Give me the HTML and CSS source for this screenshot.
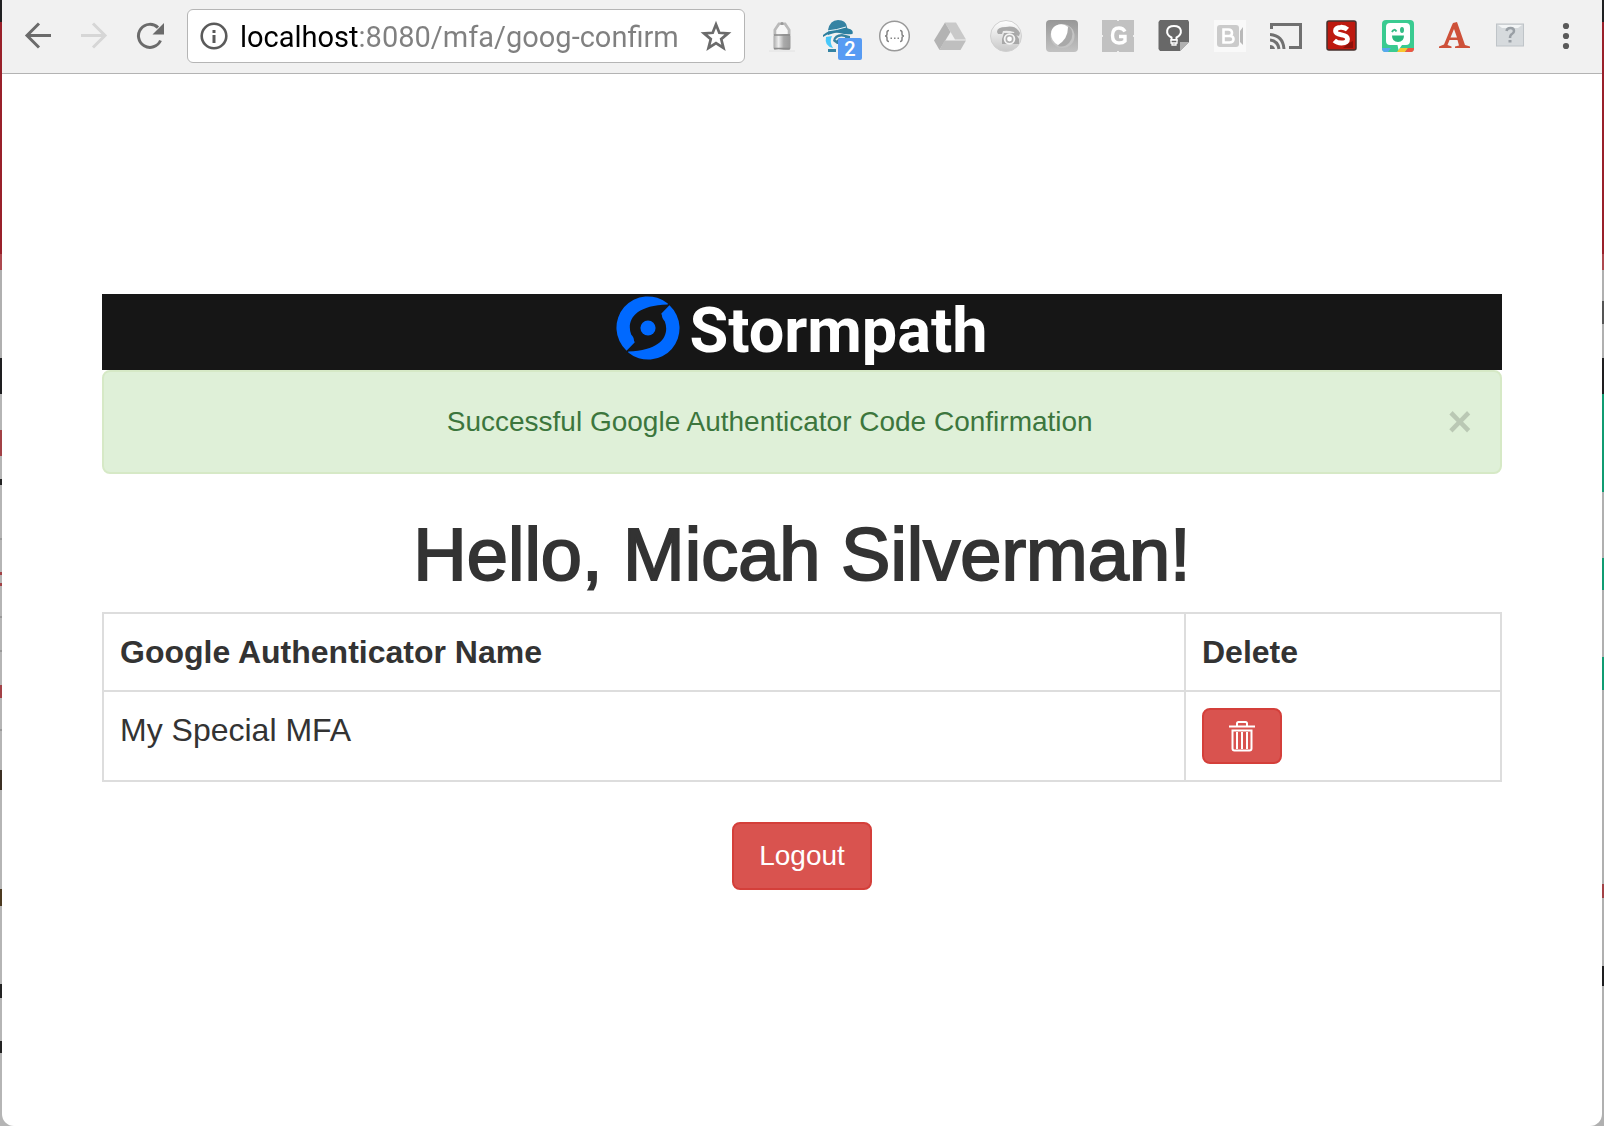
FILE: index.html
```html
<!DOCTYPE html>
<html lang="en">
<head>
<meta charset="utf-8">
<meta name="viewport" content="width=device-width, initial-scale=1">
<title>Stormpath MFA</title>
<link rel="stylesheet" href="styles.css">
</head>
<body>
<div class="window">
  <header class="toolbar">
    <nav class="icon-group" aria-label="Navigation">
      <button class="tool" type="button" aria-label="Back"><svg viewBox="0 0 32 32" fill="none" stroke="#6b6b6b" stroke-width="3"><path d="M29 15.500H5M17 3.500L5 15.500l12 12"/></svg></button>
      <button class="tool" type="button" aria-label="Forward" disabled><svg viewBox="0 0 32 32" fill="none" stroke="#d6d6d6" stroke-width="3"><path d="M3 15.500h24M15 3.500l12 12-12 12"/></svg></button>
      <button class="tool" type="button" aria-label="Reload"><svg viewBox="0 0 32 32"><path d="M26.500 20.500A11.500 11.500 0 1 1 24 7.600" fill="none" stroke="#6b6b6b" stroke-width="3"/><path d="M30 3v11.500H18.500z" fill="#6b6b6b"/></svg></button>
    </nav>
    <div class="omnibox">
      <svg class="info" viewBox="0 0 28 28"><circle cx="14" cy="14" r="12.300" fill="none" stroke="#5a5a5a" stroke-width="2.600"/><path d="M12.500 8h3v3h-3zM12.500 13h3v8h-3z" fill="#5a5a5a"/></svg>
      <input class="address" type="text" aria-label="Address" value="localhost:8080/mfa/goog-confirm">
      <button class="star" type="button" aria-label="Bookmark this page"><svg viewBox="0 0 32 32"><path d="M16 4.500l3.300 8.300 8.700.6-6.800 5.700 2.300 8.900-7.500-4.900-7.500 4.900 2.300-8.900L4 13.400l8.700-.6z" fill="none" stroke="#6b6b6b" stroke-width="2.700"/></svg></button>
    </div>
    <div class="icon-group">
      <button class="tool" type="button" aria-label="Lock"><svg viewBox="0 0 32 32"><defs><linearGradient id="metal"><stop offset="0" stop-color="#aaa"/><stop offset=".3" stop-color="#eee"/><stop offset=".6" stop-color="#aaa"/><stop offset="1" stop-color="#999"/></linearGradient></defs><path d="M9 15V10l4-6h6l4 6v5" fill="none" stroke="#bababa" stroke-width="3"/><path d="M10.500 14v-4l3.500-5h4l3.500 5v4" fill="#f7f7f7"/><circle cx="16" cy="3.500" r="1.500" fill="#999"/><rect x="7.500" y="14" width="17" height="16" rx="2" fill="url(#metal)"/><path d="M8 15h16M8 28.500h16" stroke="#8c8c8c" stroke-width="1.500"/><path d="M3 31h26" stroke="#e2e2e2"/></svg></button>
      <button class="tool badged" type="button" aria-label="Privacy, 2 items"><svg viewBox="0 0 32 32"><path d="M6 10Q8 0 16 0t9 7l1 4Q13 12 6 15z" fill="#3583a3"/><path d="M1 15Q7 10 15 8.500T26 8.500q6 1 4.500 5.500-6 1-13-1T1 17z" fill="#2d7f9f"/><path d="M5 11q10-1 19-4" stroke="#eaf5f8" fill="none"/><path d="M4 17l6-1q-3 6 1 12-9-2-7-11z" fill="#48c8fa"/><path d="M11 21q1-7 9-7l8 2v8H15z" fill="#3583a3"/><path d="M14 20q3-4 9-2" fill="none" stroke="#eee" stroke-width="1.500"/><path d="M6 32v-3h8v3" fill="#3583a3"/></svg><span class="badge">2</span></button>
      <button class="tool" type="button" aria-label="JSON viewer"><svg viewBox="0 0 32 32"><circle cx="16.500" cy="16" r="14.800" fill="#fff" stroke="#999" stroke-width="1.500"/><path d="M11 10.500q-2 0-2 2v1.500q0 2-2 2 2 0 2 2v1.500q0 2 2 2M22 10.500q2 0 2 2v1.500q0 2 2 2-2 0-2 2v1.500q0 2-2 2" fill="none" stroke="#858585" stroke-width="1.500"/><path d="M12.500 17.500H14v1.500h-1.500zM16 17.500h1.500v1.500H16zM19.500 17.500H21v1.500h-1.500z" fill="#888"/></svg></button>
      <button class="tool" type="button" aria-label="Drive"><svg viewBox="0 0 32 32"><path d="M11 2.500h11l10 17H21z" fill="#c9c9c9"/><path d="M11 2.500l5.500 9.500L5.500 30 0 20.500z" fill="#b3b3b3"/><path d="M10.500 20.500H32L26.500 30h-21z" fill="#bfbfbf"/></svg></button>
      <button class="tool" type="button" aria-label="Phone"><svg viewBox="0 0 32 32"><defs><linearGradient id="disc" x2="0" y2="1"><stop offset="0" stop-color="#fff"/><stop offset="1" stop-color="#c8c8c8"/></linearGradient></defs><circle cx="16" cy="16" r="15.500" fill="url(#disc)" stroke="#d0d0d0"/><path d="M7 12q0-5 9-5 10-2 14 6l-1 3-4-1-1-3q-6-2-11-1l-1 3H8z" fill="#aaa"/><path d="M14 13h11l4 6v5H12v-5z" fill="#a8a8a8"/><circle cx="19.500" cy="19" r="5.800" fill="#f5f5f5"/><circle cx="19.500" cy="19" r="4" fill="#b0b0b0"/><circle cx="19.500" cy="19" r="2.400" fill="#fff"/></svg></button>
      <button class="tool" type="button" aria-label="Shield"><svg viewBox="0 0 32 32"><defs><linearGradient id="tile" x2="0" y2="1"><stop offset="0" stop-color="#979797"/><stop offset="1" stop-color="#c2c2c2"/></linearGradient></defs><rect width="32" height="32" rx="4" fill="url(#tile)"/><circle cx="16.500" cy="16" r="12" fill="#c4c4c4"/><path d="M23 6q7 8 0 17-5 5-11 3z" fill="#a9a9a9"/><path d="M5 14q0-6 5-8.500 7-3 12 1.500 0 12-10 18-7-4-7-11z" fill="#fff"/></svg></button>
      <button class="tool" type="button" aria-label="G"><svg viewBox="0 0 32 32"><path d="M0 0h32v32H0z" fill="#c1c1c1"/><path d="M15 0h2v1h-2zM15 31h2v1h-2zM0 15h1v2H0zM31 15h1v2h-1z" fill="#eee"/><path d="M23 11.500Q21 8 17 8q-6.500 0-6.500 7.500T17 23q4 0 6-2v-4.500h-6" fill="none" stroke="#fff" stroke-width="3.400"/></svg></button>
      <button class="tool" type="button" aria-label="Notes"><svg viewBox="0 0 32 32"><path d="M2 0h28l1 2v20l-9 9H2l-1.500-2V2z" fill="#686868"/><path d="M31 22h-9v9z" fill="#b0b0b0"/><path d="M13.500 20v-2.500q-5-2.500-4.300-7Q10 6 16 6t6.800 4.500q.7 4.500-4.300 7V20z" fill="none" stroke="#fff" stroke-width="2"/><path d="M13 20h6v3h-6zM14 23h4v2h-4z" fill="#686868" stroke="#fff" stroke-width="1.300"/></svg></button>
      <button class="tool" type="button" aria-label="Video"><svg viewBox="0 0 32 32"><path d="M0 0h32v32H0z" fill="#f9f9f9"/><rect x="3" y="5" width="22" height="22" rx="3" fill="#cbcbcb"/><path d="M26 11l3-4v18l-3-3z" fill="#b9b9b9"/><path d="M9.500 9.500v13h6q4 0 4-3.500 0-3-3.500-3h-6 5q3 0 3-3.200 0-3.300-3.500-3.300z" fill="none" stroke="#fff" stroke-width="2.600"/></svg></button>
      <button class="tool" type="button" aria-label="Cast"><svg viewBox="0 0 32 32" fill="none" stroke="#707070" stroke-width="3"><path d="M1.500 9V4.500h29v23H19"/><path d="M0 14.500q13 1 14 14.500M0 20q8 1 9 9"/><path d="M0 25q4 0 5 4H0z" fill="#707070" stroke="none"/></svg></button>
      <button class="tool" type="button" aria-label="S"><svg viewBox="0 0 32 32"><rect x="1" y="1" width="29" height="29" rx="2" fill="#bd190f" stroke="#45302e" stroke-width="1.500"/><path d="M18 27l5-4 4-2v7H17z" fill="#8e100a"/><path d="M21.500 9.500Q18.500 7 14.500 7.300q-5 .2-5 3.700 0 2.800 6 3.800 6 1 6 4.200 0 4-6 4-4.500 0-7.200-2.500" fill="none" stroke="#fff" stroke-width="4.800"/></svg></button>
      <button class="tool" type="button" aria-label="Smiley"><svg viewBox="0 0 32 32"><rect width="32" height="32" rx="4" fill="#3acb91"/><path d="M0 28h9l-3 4H3q-3 0-3-4z" fill="#57a8ee"/><path d="M18 28h8l-3 4h-8z" fill="#f9c62e"/><path d="M26 28h6q0 4-3 4h-6z" fill="#ef5642"/><path d="M8 3h16q4 0 4 4v14q0 4-4 4h-4l-3.500 5-1-5H8q-4 0-4-4V7q0-4 4-4z" fill="#fff"/><path d="M10 15.500h12q0 6.500-6 6.500t-6-6.500z" fill="#29b97e"/><path d="M10 12q2-4 4.500-.5" fill="none" stroke="#35bd87" stroke-width="2"/><ellipse cx="20" cy="10" rx="2" ry="3" fill="#35bd87"/></svg></button>
      <button class="tool" type="button" aria-label="A"><svg viewBox="0 0 32 32"><path fill="#ce5139" fill-rule="evenodd" d="M15 3l4-1 8 23 5 1.500V28H17v-1.500l4-1-1.500-5.500h-8L9.500 25l4 1.500V28H1v-1.500l5-2L14 5zM16 9l-3.500 8.500h6.500z"/></svg></button>
      <button class="tool" type="button" aria-label="Unknown extension"><svg viewBox="0 0 32 32"><rect x="2.500" y="4" width="27" height="22" fill="#d6dadd" stroke="#bfc4c8"/><path d="M4 5h24l-4 3H8z" fill="#f3f5f6"/><path d="M12.500 11q.5-3 4-3t3.500 3q0 2-2 3t-2 4" fill="none" stroke="#999fa5" stroke-width="2.500"/><path d="M14.500 20h3v2.500h-3z" fill="#999fa5"/></svg></button>
      <button class="tool" type="button" aria-label="Menu"><svg viewBox="0 0 32 32" fill="#5a5a5a"><circle cx="16" cy="6" r="3.100"/><circle cx="16" cy="16" r="3.100"/><circle cx="16" cy="26" r="3.100"/></svg></button>
    </div>
  </header>
  <main class="page">
    <div class="brand">
      <svg class="brand-mark" viewBox="58 33 194 194" fill="#0069ff"><path d="M215 56A95 95 0 0 0 90 199L115 173C110 167 116 163 104 150C90 112 108 62 215 59Z"/><path d="M215 56A95 95 0 0 0 90 199L115 173C110 167 116 163 104 150C90 112 108 62 215 59Z" transform="rotate(180 155 130)"/><circle cx="155" cy="130" r="23"/></svg>
      <span class="brand-name">Stormpath</span>
    </div>
    <div class="alert" role="alert">
      <p class="alert-text">Successful Google Authenticator Code Confirmation</p>
      <button class="close" type="button" aria-label="Close">×</button>
    </div>
    <h1 class="greeting">Hello, Micah Silverman!</h1>
    <table class="factors">
      <thead><tr><th scope="col">Google Authenticator Name</th><th class="delete-col" scope="col">Delete</th></tr></thead>
      <tbody><tr><td>My Special MFA</td><td><button class="btn btn-trash" type="button" aria-label="Delete My Special MFA"><svg viewBox="0 0 26 32" fill="none" stroke="#fff" stroke-width="2"><path d="M0 6.500h26M8 6V3.500Q8 2 9.500 2h7Q18 2 18 3.500V6M3.500 10.500h19v18q0 2-2 2h-15q-2 0-2-2zM8 12v17M13 12v17M18 12v17"/></svg></button></td></tr></tbody>
    </table>
    <button class="btn btn-logout" type="button">Logout</button>
  </main>
</div>
</body>
</html>
```
FILE: styles.css
```css
* { box-sizing: border-box; }

body {
  margin: 0;
  min-height: 100vh;
  display: flex;
  padding: 0 2px;
  font-family: "Liberation Sans", Arial, sans-serif;
  color: #333;
  /* Slivers of the desktop on either side of the window */
  background:
    linear-gradient(#202022 22px, #99202a 22px 254px, #ad4a50 254px 270px, #b0b0b0 270px 358px, #1e1e20 358px 394px, #b5b5b5 394px 430px, #a24146 430px 456px, #b5b5b5 456px 479px, #222 479px 485px, #b5b5b5 485px 538px, #9a9a9a 538px 540px, #b5b5b5 540px 572px, #a24146 572px 575px, #b5b5b5 575px 583px, #a24146 583px 586px, #b5b5b5 586px 616px, #999 616px 618px, #b5b5b5 618px 650px, #999 650px 652px, #b5b5b5 652px 685px, #a24146 685px 698px, #b5b5b5 698px 729px, #999 729px 731px, #b5b5b5 731px 770px, #3c3024 770px 790px, #b5b5b5 790px 889px, #4c3a20 889px 906px, #b5b5b5 906px 984px, #222 984px 998px, #b5b5b5 998px 1041px, #222 1041px 1053px, #b5b5b5 1053px) left top / 50% 100% no-repeat,
    linear-gradient(#202022 22px, #99202a 22px 254px, #ad4a50 254px 270px, #b0b0b0 270px 301px, #555 301px 324px, #b0b0b0 324px 358px, #1e1e20 358px 394px, #109c72 394px 492px, #b0b0b0 492px 558px, #109c72 558px 590px, #b0b0b0 590px 657px, #109c72 657px 690px, #b0b0b0 690px 884px, #a24146 884px 898px, #b0b0b0 898px 966px, #1e1e20 966px 986px, #b0b0b0 986px) right top / 50% 100% no-repeat;
}

button, input { font-family: inherit; }
svg { display: block; }

.window {
  flex: 1;
  min-width: 0;
  display: flex;
  flex-direction: column;
  overflow: hidden;
  background: #fff;
  border-radius: 0 0 12px 12px;
}

.toolbar {
  display: flex;
  align-items: center;
  gap: 21px;
  padding: 9px 20px 10px;
  background: #f1f1f1;
  border-bottom: 1px solid #b3b3b3;
}

.icon-group { display: flex; gap: 24px; }

.tool, .star {
  flex: none;
  width: 32px;
  height: 32px;
  padding: 0;
  border: 0;
  background: none;
}

.tool svg, .star svg { width: 32px; height: 32px; }

.badged { position: relative; }

.badge {
  position: absolute;
  left: 16px;
  top: 18px;
  width: 24px;
  height: 22px;
  border-radius: 2px;
  background: #579bf3;
  color: #fff;
  font: 500 20px/22px Roboto, sans-serif;
  text-align: center;
}

.omnibox {
  flex: 1;
  min-width: 0;
  display: flex;
  align-items: center;
  height: 54px;
  padding: 0 12px;
  border: 1px solid #b5b5b5;
  border-radius: 6px;
  background: #fff;
}

.info { flex: none; width: 28px; height: 28px; }

.address {
  flex: 1;
  min-width: 0;
  margin-left: 12px;
  padding: 2px 0 0;
  border: 0;
  outline: 0;
  font: 400 29px/40px Roboto, sans-serif;
  color: #808080;
  /* The host name is black, the rest of the address grey */
  background: linear-gradient(90deg, #000 118px, #808080 118px);
  -webkit-background-clip: text;
  background-clip: text;
  -webkit-text-fill-color: transparent;
}

.page {
  width: 100%;
  max-width: 1440px;
  margin: 0 auto;
  padding: 220px 20px 40px;
  display: flex;
  flex-direction: column;
}

.brand {
  display: flex;
  justify-content: center;
  gap: 9px;
  height: 76px;
  padding-top: 2px;
  background: #161616;
}

.brand-mark { width: 64px; height: 64px; }

.brand-name {
  color: #fff;
  font: 700 63px/70px Roboto, sans-serif;
}

.alert {
  display: flex;
  align-items: center;
  padding: 30px 28px 30px 30px;
  border: 2px solid #d6e9c6;
  border-radius: 8px;
  background: #dff0d8;
  color: #3c763d;
}

.alert-text {
  flex: 1;
  margin: 0 42px 0 0;
  font-size: 28px;
  line-height: 40px;
  text-align: center;
}

.close {
  padding: 0;
  border: 0;
  background: none;
  color: #000;
  opacity: .16;
  font-size: 42px;
  font-weight: 700;
  line-height: 40px;
}

.greeting {
  margin: 42px 0 18px;
  font-size: 74px;
  font-weight: 400;
  line-height: 78px;
  text-align: center;
  -webkit-text-stroke: 2px #333;
}

.factors {
  width: 100%;
  border-collapse: collapse;
  font-size: 32px;
  line-height: 44px;
}

.factors th, .factors td {
  padding: 16px;
  border: 2px solid #ddd;
  text-align: left;
  vertical-align: top;
}

.factors .delete-col { width: 316px; }

.btn {
  border: 2px solid #d43f3a;
  border-radius: 8px;
  background: #d9534f;
  color: #fff;
}

.btn-trash {
  display: flex;
  align-items: center;
  justify-content: center;
  width: 80px;
  height: 56px;
  padding: 0;
}

.btn-trash svg { width: 26px; height: 32px; }

.btn-logout {
  align-self: center;
  margin-top: 40px;
  padding: 12px 25px;
  font-size: 28px;
  line-height: 40px;
}
```
